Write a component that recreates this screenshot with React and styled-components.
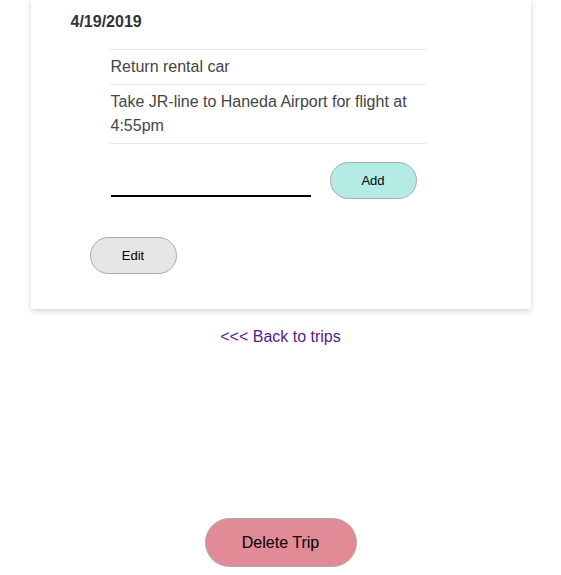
import styled, { createGlobalStyle } from 'styled-components';

const GlobalStyle = createGlobalStyle`
  body {
    margin: 0;
    background: #fff;
    font-family: 'Liberation Sans', Arial, sans-serif;
  }
`;

const Page = styled.div`
  display: flex;
  flex-direction: column;
  align-items: center;
`;

const Card = styled.div`
  width: 500px;
  box-sizing: border-box;
  padding: 13px 0 35px;
  background: #fff;
  box-shadow: 0 2px 6px rgba(0, 0, 0, 0.18);
`;

const DateTitle = styled.h4`
  margin: 0 0 18px 40px;
  font-size: 16px;
  line-height: 18px;
  font-weight: 700;
  color: #333;
`;

const ItemList = styled.ul`
  list-style: none;
  margin: 0 0 0 79px;
  padding: 0;
  width: 316px;
  border-top: 1px solid #e6e6e6;
`;

const Item = styled.li`
  padding: 5px 0 5px 1px;
  font-size: 16px;
  line-height: 24px;
  color: #444;
  border-bottom: 1px solid #e6e6e6;
`;

const AddRow = styled.div`
  display: flex;
  align-items: flex-end;
  gap: 19px;
  margin: 18px 0 0 80px;
`;

const TextInput = styled.input`
  width: 200px;
  height: 28px;
  box-sizing: border-box;
  margin-bottom: 2px;
  border: none;
  border-bottom: 2px solid #000;
  outline: none;
  font-family: inherit;
  font-size: 16px;
`;

const PillButton = styled.button`
  width: ${p => p.$w || 87}px;
  height: ${p => p.$h || 37}px;
  border: 1px solid #aaa;
  border-radius: 999px;
  background: ${p => p.$bg};
  color: #000;
  font-family: 'Liberation Sans', Arial, sans-serif;
  font-size: ${p => p.$size || 13}px;
  cursor: pointer;
`;

const EditWrap = styled.div`
  margin: 38px 0 0 59px;
`;

const BackLink = styled.a`
  margin-top: 19px;
  font-size: 16px;
  line-height: 18px;
  color: #551a8b;
  text-decoration: none;
`;

const DeleteWrap = styled.div`
  margin-top: 172px;
`;

const App = () => {
  return (
    <Page>
      <GlobalStyle />
      <Card>
        <DateTitle>4/19/2019</DateTitle>
        <ItemList>
          <Item>Return rental car</Item>
          <Item>Take JR-line to Haneda Airport for flight at 4:55pm</Item>
        </ItemList>
        <AddRow>
          <TextInput type="text" />
          <PillButton $bg="#b5ebe5">Add</PillButton>
        </AddRow>
        <EditWrap>
          <PillButton $bg="#e6e6e6">Edit</PillButton>
        </EditWrap>
      </Card>
      <BackLink href="#">&lt;&lt;&lt; Back to trips</BackLink>
      <DeleteWrap>
        <PillButton $bg="#e08b95" $w={152} $h={49} $size={16}>Delete Trip</PillButton>
      </DeleteWrap>
    </Page>
  );
};

export default App;
